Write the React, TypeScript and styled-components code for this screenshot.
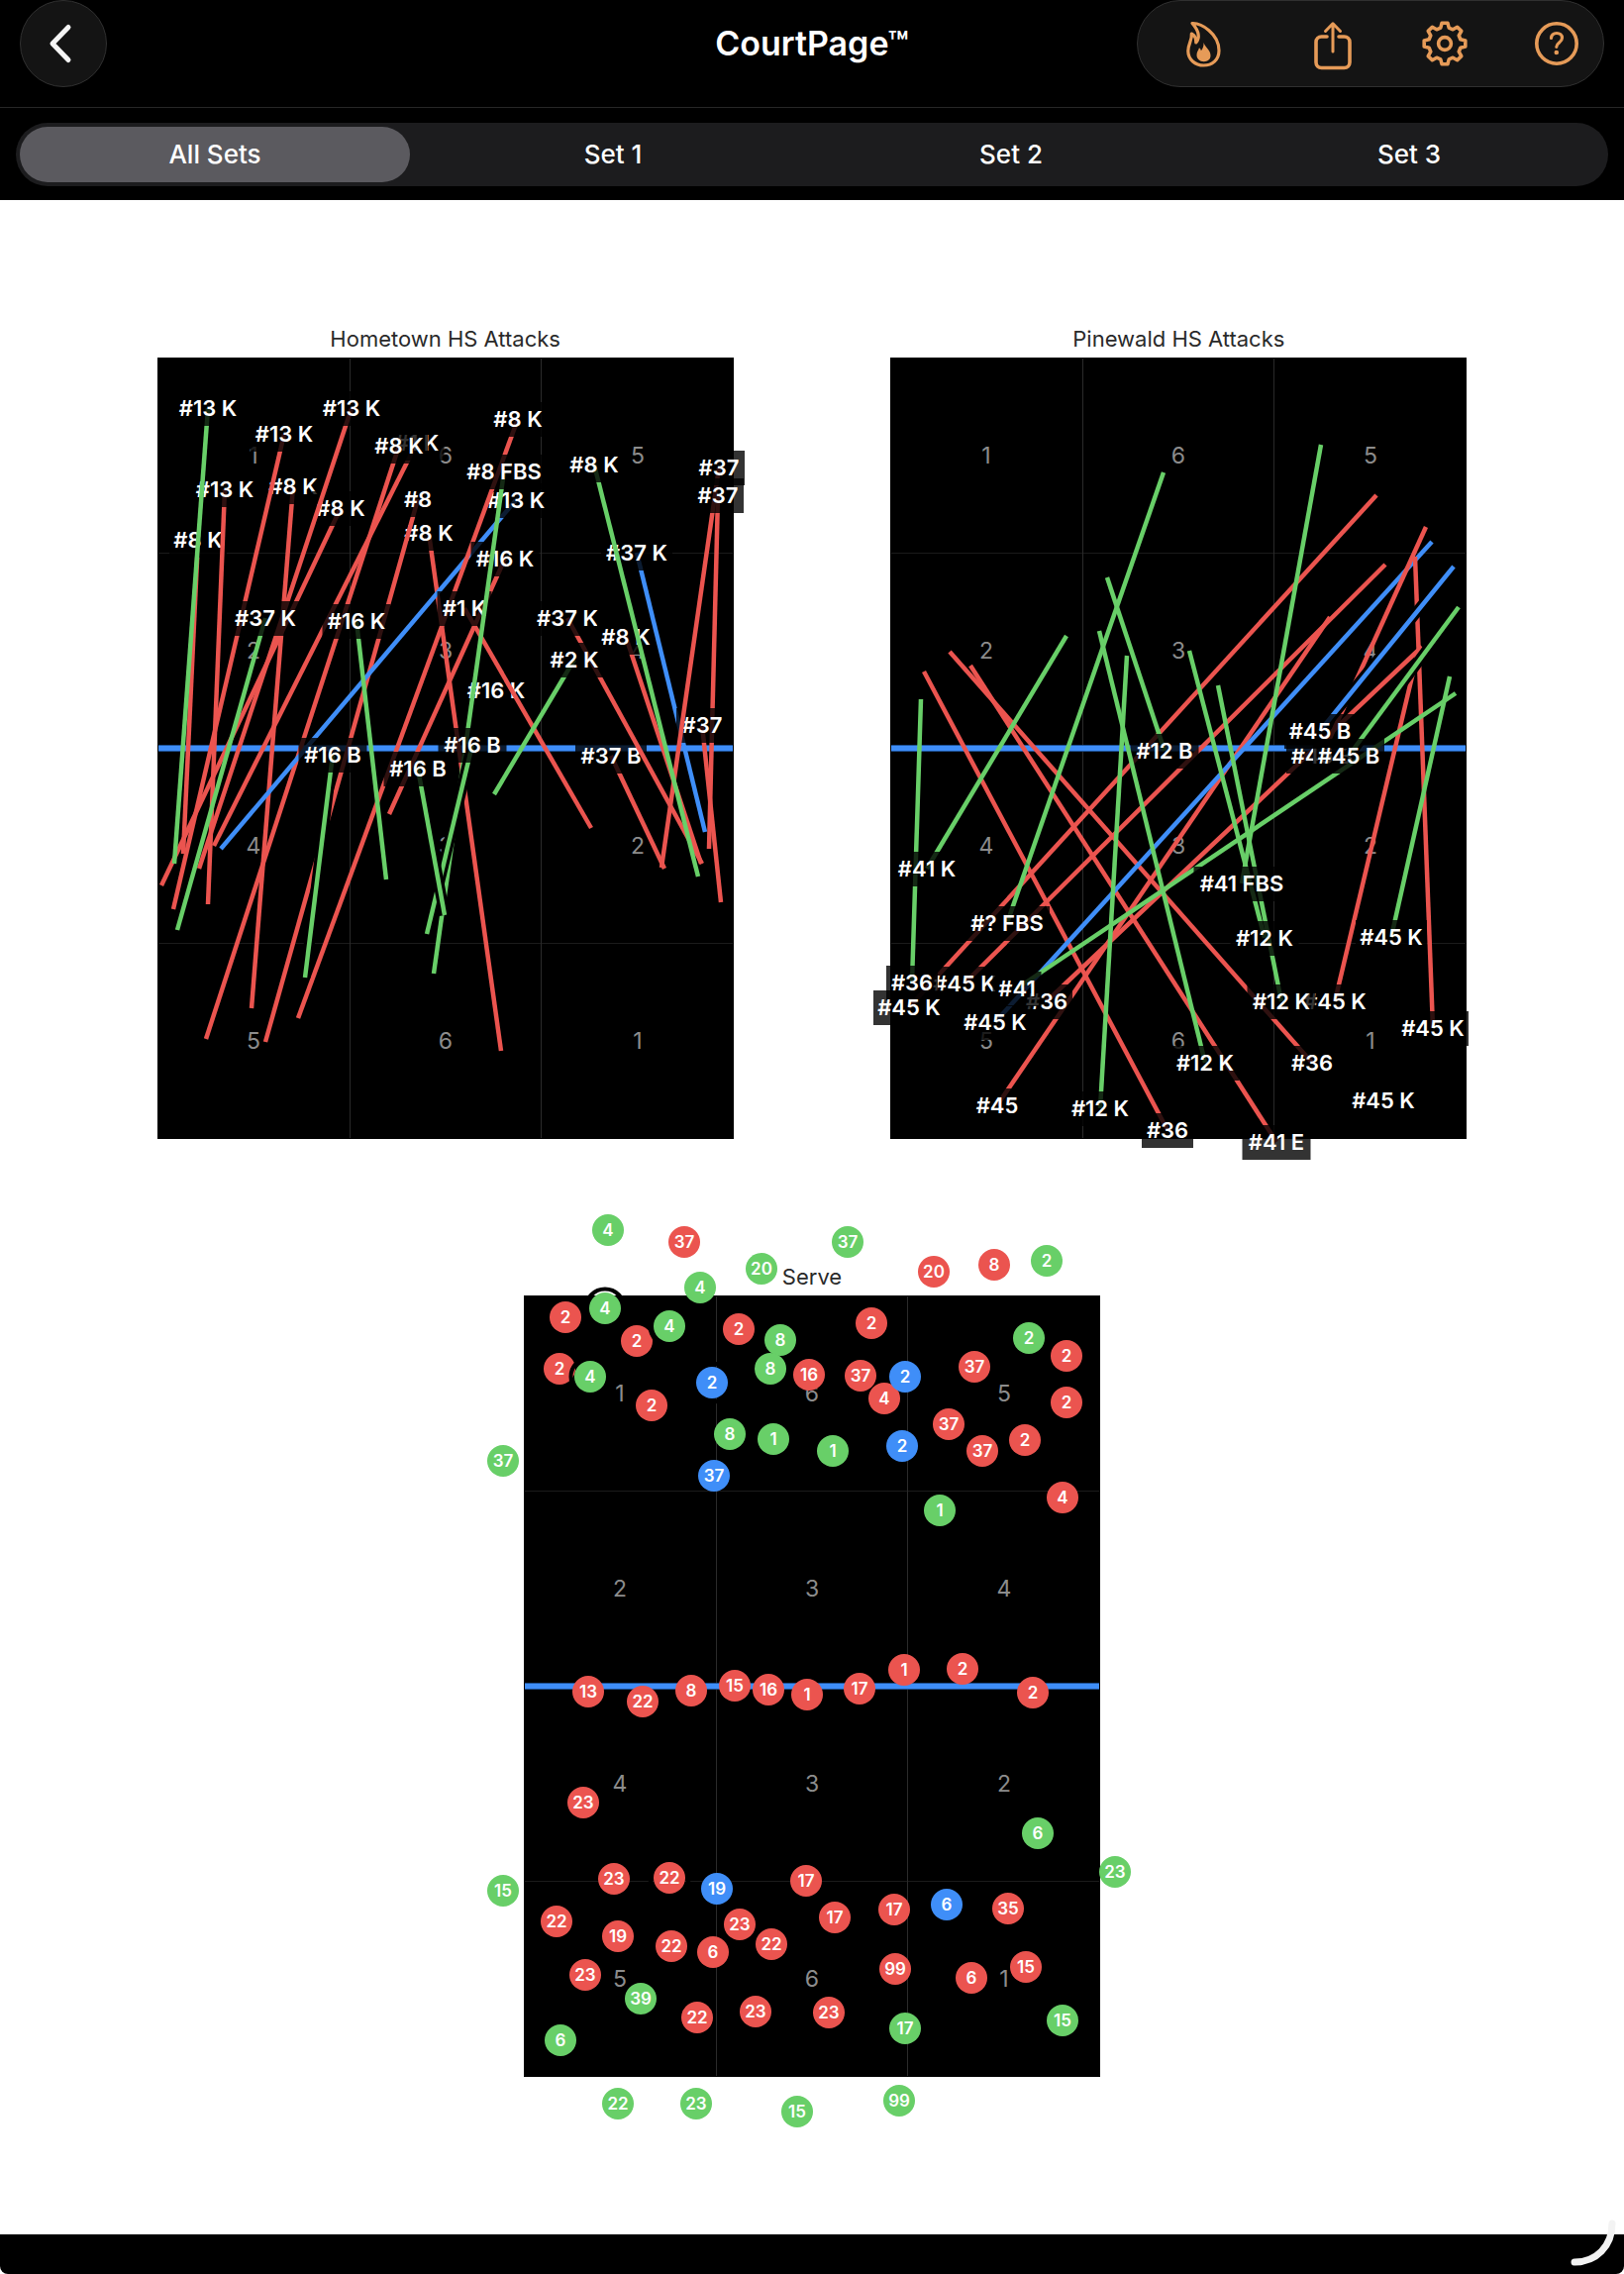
import { useState } from "react";
import styled, { createGlobalStyle } from "styled-components";

type Tone = "red" | "green" | "blue";

interface Attack {
  label: string;
  tone: Tone;
  at: [number, number];
  to?: [number, number];
  halo?: boolean;
}

interface Serve {
  player: number;
  tone: Tone;
  x: number;
  y: number;
  halo?: boolean;
}

const tones: Record<Tone, string> = {
  red: "#eb544f",
  green: "#68cf68",
  blue: "#3f8ef8",
};

const COURT_WIDTH = 582;
const COURT_HEIGHT = 789;
const sets = ["All Sets", "Set 1", "Set 2", "Set 3"];
const zones = [
  [1, 6, 5],
  [2, 3, 4],
  [4, 3, 2],
  [5, 6, 1],
];

const attack = (
  label: string,
  tone: Tone,
  at: [number, number],
  to?: [number, number],
  halo?: boolean
): Attack => ({ label, tone, at, to, halo });

const serve = (
  player: number,
  tone: Tone,
  x: number,
  y: number,
  halo?: boolean
): Serve => ({ player, tone, x, y, halo });

// an empty label draws only the line, its label comes later in the list
const homeAttacks: Attack[] = [
  attack("#8 K", "red", [41, 184], [26, 501]),
  attack("#8 K", "red", [137, 130], [95, 657]),
  attack("#8 K", "red", [185, 152], [4, 533]),
  attack("#13 K", "red", [68, 133], [51, 552]),
  attack("#13 K", "red", [128, 77], [16, 557]),
  attack("#13 K", "red", [196, 51], [42, 516]),
  attack("#1 K", "red", [262, 86], [57, 493]),
  attack("#8 K", "red", [244, 89], [49, 688]),
  attack("#8 K", "red", [274, 177], [347, 700]),
  attack("#8", "red", [263, 143], [109, 691]),
  attack("#13 K", "blue", [362, 144], [64, 496]),
  attack("#8 K", "red", [364, 62], [142, 667]),
  attack("#16 K", "red", [351, 203], [234, 461]),
  attack("#16 K", "red", [342, 336]),
  attack("#1 K", "red", [310, 253], [438, 475]),
  attack("#37 B", "red", [458, 402], [512, 516]),
  attack("#37 K", "red", [414, 263], [550, 511]),
  attack("#8 K", "red", [473, 282], [549, 511]),
  attack("", "red", [566, 139], [557, 496]),
  attack("#37 K", "blue", [484, 197], [553, 479]),
  attack("#37", "red", [550, 371], [569, 550]),
  attack("#37", "red", [567, 111], [509, 515]),
  attack("#37", "red", [566, 139]),
  attack("#13 K", "green", [51, 51], [17, 511]),
  attack("#37 K", "green", [109, 263], [20, 578]),
  attack("#16 K", "green", [201, 266], [231, 527]),
  attack("#8 FBS", "green", [350, 115], [279, 622]),
  attack("#2 K", "green", [421, 305], [340, 441]),
  attack("#8 K", "green", [441, 108], [546, 524]),
  attack("#16 B", "green", [177, 401], [149, 626], true),
  attack("#16 B", "green", [318, 391], [272, 582], true),
  attack("#16 B", "green", [263, 415], [290, 563], true),
];

const awayAttacks: Attack[] = [
  attack("#36", "red", [280, 780], [34, 317]),
  attack("#41 E", "red", [390, 792], [81, 311]),
  attack("#36", "red", [426, 712], [60, 297]),
  attack("", "red", [19, 656], [491, 139]),
  attack("#45 K", "red", [75, 632], [500, 209]),
  attack("#45", "red", [108, 755], [444, 262]),
  attack("#36", "red", [158, 650], [537, 292]),
  attack("#45 K", "red", [449, 650], [533, 297]),
  attack("#45 K", "blue", [106, 671], [547, 186]),
  attack("#45 B", "red", [436, 402], [541, 171]),
  attack("#45 K", "red", [548, 677], [530, 201]),
  attack("#45 B", "blue", [434, 377], [569, 211], true),
  attack("#36", "green", [22, 631], [31, 345]),
  attack("#45 K", "red", [19, 656]),
  attack("#41 K", "green", [37, 516], [178, 281]),
  attack("#? FBS", "green", [118, 571], [276, 116]),
  attack("#12 K", "green", [212, 758], [239, 301]),
  attack("#12 B", "green", [277, 397], [219, 222]),
  attack("#12 K", "green", [318, 712], [211, 276]),
  attack("#41", "green", [128, 637], [571, 339]),
  attack("#12 K", "green", [395, 650], [331, 331]),
  attack("#12 K", "green", [378, 586], [302, 296]),
  attack("#41 FBS", "green", [355, 531], [435, 88]),
  attack("#45 K", "green", [506, 585], [565, 322]),
  attack("#45 B", "green", [463, 402], [574, 252], true),
  attack("#45 K", "red", [498, 750]),
];

const serves: Serve[] = [
  serve(4, "green", 85, -66),
  serve(37, "red", 162, -54),
  serve(20, "green", 240, -27),
  serve(4, "green", 178, -8),
  serve(37, "green", 327, -54),
  serve(20, "red", 414, -24),
  serve(8, "red", 475, -31),
  serve(2, "green", 528, -35),
  serve(2, "red", 42, 22),
  serve(4, "green", 82, 13, true),
  serve(2, "red", 114, 46),
  serve(4, "green", 147, 31, true),
  serve(2, "red", 36, 74),
  serve(4, "green", 67, 82, true),
  serve(2, "blue", 190, 88, true),
  serve(2, "red", 129, 111),
  serve(2, "red", 217, 34),
  serve(8, "green", 259, 45),
  serve(8, "green", 249, 74),
  serve(16, "red", 288, 80),
  serve(37, "red", 340, 81),
  serve(4, "red", 364, 104),
  serve(2, "blue", 385, 82),
  serve(2, "red", 351, 28),
  serve(37, "red", 455, 72),
  serve(2, "green", 510, 43),
  serve(2, "red", 548, 61),
  serve(2, "red", 548, 108),
  serve(37, "red", 429, 130),
  serve(37, "red", 463, 157),
  serve(2, "red", 506, 146),
  serve(2, "blue", 382, 152),
  serve(8, "green", 208, 140),
  serve(1, "green", 252, 145),
  serve(1, "green", 312, 157),
  serve(37, "blue", 192, 182),
  serve(37, "green", -21, 167),
  serve(4, "red", 544, 204),
  serve(1, "green", 420, 217),
  serve(13, "red", 65, 400),
  serve(22, "red", 120, 410),
  serve(8, "red", 169, 399),
  serve(15, "red", 213, 394),
  serve(16, "red", 247, 398),
  serve(1, "red", 286, 403),
  serve(17, "red", 339, 397),
  serve(1, "red", 384, 378),
  serve(2, "red", 443, 377),
  serve(2, "red", 514, 401),
  serve(23, "red", 60, 512),
  serve(6, "green", 519, 543),
  serve(23, "green", 597, 582),
  serve(15, "green", -21, 601),
  serve(23, "red", 91, 589),
  serve(22, "red", 147, 588, true),
  serve(19, "blue", 195, 599),
  serve(17, "red", 285, 591),
  serve(17, "red", 314, 628),
  serve(17, "red", 374, 620),
  serve(6, "blue", 427, 615),
  serve(35, "red", 489, 619),
  serve(22, "red", 33, 632),
  serve(19, "red", 95, 647),
  serve(22, "red", 149, 657),
  serve(6, "red", 191, 663),
  serve(23, "red", 218, 635),
  serve(22, "red", 250, 655),
  serve(99, "red", 375, 680),
  serve(6, "red", 452, 689),
  serve(15, "red", 507, 678),
  serve(23, "red", 62, 686),
  serve(39, "green", 118, 710),
  serve(22, "red", 175, 729),
  serve(23, "red", 234, 723),
  serve(23, "red", 308, 724),
  serve(17, "green", 385, 740),
  serve(15, "green", 544, 732),
  serve(6, "green", 37, 752),
  serve(22, "green", 95, 816),
  serve(23, "green", 174, 816),
  serve(15, "green", 276, 824),
  serve(99, "green", 379, 813),
];

const charWidths: Record<string, number> = { " ": 6, "1": 11 };

// room for the text plus 5px on each side
const labelWidth = (label: string) =>
  [...label].reduce((sum, char) => sum + (charWidths[char] ?? 14), 10);

const gearOutline = () => {
  const points: string[] = [];
  for (let tooth = 0; tooth < 8; tooth++) {
    const center = tooth * 45 - 90;
    [
      [-15, 16.4],
      [-8, 21],
      [8, 21],
      [15, 16.4],
    ].forEach(([offset, radius]) => {
      const angle = ((center + offset) * Math.PI) / 180;
      points.push(
        `${24 + radius * Math.cos(angle)} ${24 + radius * Math.sin(angle)}`
      );
    });
  }
  return `M${points.join("L")}Z`;
};

function AttackMark({ label, tone, at, to, halo }: Attack) {
  const width = labelWidth(label);
  const [x, y] = at;
  const line = to && { x1: x, y1: y, x2: to[0], y2: to[1] };

  return (
    <g>
      {line && halo && <line {...line} stroke="#000" strokeWidth={11} />}
      {line && <line {...line} stroke={tones[tone]} strokeWidth={4.5} />}
      {label && (
        <>
          <rect
            x={x - width / 2}
            y={y - 17}
            width={width}
            height={35}
            fill="#000"
            fillOpacity={0.8}
          />
          <AttackText x={x} y={y + 8}>
            {label}
          </AttackText>
        </>
      )}
    </g>
  );
}

function ServeMark({ player, tone, x, y, halo }: Serve) {
  return (
    <g>
      {halo && (
        <circle cx={x} cy={y} r={19.5} fill="none" stroke="#000" strokeWidth={4} />
      )}
      <circle cx={x} cy={y} r={16} fill={tones[tone]} />
      <ServeText x={x} y={y + 6}>
        {player}
      </ServeText>
    </g>
  );
}

interface CourtProps {
  title: string;
  attacks?: Attack[];
  serves?: Serve[];
}

function Court({ title, attacks = [], serves = [] }: CourtProps) {
  const column = COURT_WIDTH / 3;
  const row = COURT_HEIGHT / 4;

  return (
    <Figure>
      <Caption>{title}</Caption>
      <Chart
        viewBox={`0 0 ${COURT_WIDTH} ${COURT_HEIGHT}`}
        role="img"
        aria-label={title}
      >
        <rect width={COURT_WIDTH} height={COURT_HEIGHT} fill="#000" />
        <path d="M1 197.5H581M1 591.5H581" stroke="#1b1b1b" strokeWidth={1} />
        <path d="M194.5 1V788M387.5 1V788" stroke="#2a2a2a" strokeWidth={1} />
        <path d="M1 394.5H581" stroke="#1d4f92" strokeWidth={7} />
        <path d="M1 394.5H581" stroke={tones.blue} strokeWidth={5} />
        {zones.map((line, r) =>
          line.map((zone, c) => (
            <ZoneText
              key={`${r}-${c}`}
              x={column * (c + 0.5)}
              y={row * (r + 0.5) + 8}
            >
              {zone}
            </ZoneText>
          ))
        )}
        {attacks.map((item, index) => (
          <AttackMark key={index} {...item} />
        ))}
        {serves.map((item, index) => (
          <ServeMark key={index} {...item} />
        ))}
      </Chart>
    </Figure>
  );
}

export default function App() {
  const [current, setCurrent] = useState(sets[0]);

  return (
    <Page>
      <GlobalStyle />
      <Header>
        <BackButton type="button" aria-label="Back">
          <Icon viewBox="0 0 48 48">
            <path d="M29 7.500 13 24l16 16.500" strokeWidth="5" />
          </Icon>
        </BackButton>
        <Title>CourtPage™</Title>
        <Actions>
          <FlameButton type="button" aria-label="Highlights">
            <Icon viewBox="0 0 48 48">
              <path
                d="M13 3.500C22 3 40 14 40 31c0 9.500-7 15-15.500 15S8.800 40 8.800 31.500C8.800 24 13 21 12.300 14c3.400 1.600 4.700 4.500 4.500 9 4.200-5 2.700-12-3.800-19.500Z"
                strokeWidth="3.200"
              />
              <path
                d="M24.500 23c1.500 5 7 7.500 7 13 0 4-3 6.200-6.700 6.200-4.300 0-7.300-2.800-7.300-6.700 0-3 1.600-4.500 2.500-7.300 1.200.8 1.700 1.800 1.900 3.100 1.900-2.200 2.800-5 2.600-8.300Z"
                fill="currentColor"
                stroke="none"
              />
            </Icon>
          </FlameButton>
          <IconButton type="button" aria-label="Share">
            <Icon viewBox="0 0 48 48">
              <path d="M18 17h-5.500a5.500 5.500 0 0 0-5.500 5.500V43a5.500 5.500 0 0 0 5.500 5.500h23A5.500 5.500 0 0 0 41 43V22.500a5.500 5.500 0 0 0-5.500-5.500H30" />
              <path d="M24 32V4M16.500 11.500 24 3.800l7.500 7.700" strokeWidth="3" />
            </Icon>
          </IconButton>
          <IconButton type="button" aria-label="Settings">
            <Icon viewBox="0 0 48 48">
              <path d={gearOutline()} />
              <circle cx="24" cy="24" r="6.400" />
            </Icon>
          </IconButton>
          <IconButton type="button" aria-label="Help">
            <Icon viewBox="0 0 48 48">
              <circle cx="24" cy="24" r="20.200" />
              <path
                d="M18.500 18.500c.2-3.200 2.300-5 5.500-5s5.500 1.900 5.500 4.800c0 4.700-5.700 4.500-5.700 9"
                strokeWidth="3.200"
              />
              <circle cx="23.800" cy="33" r="2.300" fill="currentColor" stroke="none" />
            </Icon>
          </IconButton>
        </Actions>
      </Header>
      <SetBar>
        <Sets role="tablist">
          {sets.map((name) => (
            <SetButton
              key={name}
              type="button"
              role="tab"
              aria-selected={name === current}
              $active={name === current}
              onClick={() => setCurrent(name)}
            >
              {name}
            </SetButton>
          ))}
        </Sets>
      </SetBar>
      <Main>
        <Row>
          <Court title="Hometown HS Attacks" attacks={homeAttacks} />
          <Court title="Pinewald HS Attacks" attacks={awayAttacks} />
        </Row>
        <Row>
          <Court title="Serve" serves={serves} />
        </Row>
      </Main>
      <Footer>
        <CornerMark viewBox="0 0 52 52" aria-hidden="true">
          <path d="M40 1C40 24 24 40 2 40" />
        </CornerMark>
      </Footer>
    </Page>
  );
}

const GlobalStyle = createGlobalStyle`
  * {
    box-sizing: border-box;
  }
  body {
    margin: 0;
    background: #ffffff;
    font-family: "Inter", "Liberation Sans", sans-serif;
  }
  button {
    padding: 0;
    border: none;
    background: none;
    color: inherit;
    font-family: inherit;
    cursor: pointer;
  }
`;
const Page = styled.div`
  display: flex;
  flex-direction: column;
  min-height: 100vh;
`;
const Header = styled.header`
  display: grid;
  grid-template-columns: 1fr auto 1fr;
  align-items: center;
  padding: 0 20px 20px;
  border-bottom: 1px solid #262626;
  background: #000000;
  color: #ffffff;
`;
const BackButton = styled.button`
  display: flex;
  align-items: center;
  justify-content: center;
  width: 88px;
  height: 88px;
  border: 1px solid #303030;
  border-radius: 50%;
  background: #141414;
  color: #f4f4f4;
`;
const Title = styled.h1`
  margin: 0;
  font-size: 34px;
  font-weight: 600;
  line-height: 40px;
`;
const Actions = styled.div`
  display: flex;
  align-items: center;
  justify-content: space-between;
  justify-self: end;
  width: 472px;
  height: 88px;
  padding: 0 19px 0 38px;
  border: 1px solid #303030;
  border-radius: 44px;
  background: #141414;
  color: #e69b58;
`;
const IconButton = styled.button`
  display: flex;
  align-items: center;
  justify-content: center;
  width: 56px;
  height: 56px;
`;
const FlameButton = styled(IconButton)`
  margin-right: 18px;
`;
const Icon = styled.svg`
  width: 48px;
  height: 48px;
  overflow: visible;
  fill: none;
  stroke: currentColor;
  stroke-width: 3.6;
  stroke-linecap: round;
  stroke-linejoin: round;
`;
const SetBar = styled.nav`
  padding: 15px 16px 14px;
  background: #000000;
`;
const Sets = styled.div`
  display: grid;
  grid-template-columns: repeat(4, 1fr);
  height: 64px;
  border-radius: 32px;
  background: #1c1c1e;
`;
const SetButton = styled.button<{ $active: boolean }>`
  margin: 4px;
  padding-bottom: 2px;
  border-radius: 28px;
  background: ${({ $active }) => ($active ? "#5b5a5f" : "transparent")};
  color: #ffffff;
  font-size: 26px;
  font-weight: 500;
`;
const Main = styled.main`
  display: flex;
  flex: 1;
  flex-direction: column;
  gap: 127px;
  padding: 128px 0;
  background: #ffffff;
`;
const Row = styled.section`
  display: flex;
  justify-content: space-evenly;
`;
const Figure = styled.figure`
  flex: 0 1 582px;
  min-width: 0;
  margin: 0;
`;
const Caption = styled.figcaption`
  margin-bottom: 7px;
  color: #2a2a2a;
  font-size: 22px;
  line-height: 24px;
  text-align: center;
`;
const Chart = styled.svg`
  display: block;
  width: 100%;
  height: auto;
  overflow: visible;
`;
const ZoneText = styled.text`
  fill: #8c8c8c;
  font-size: 23px;
  text-anchor: middle;
`;
const AttackText = styled.text`
  fill: #ffffff;
  font-size: 22px;
  font-weight: 600;
  text-anchor: middle;
`;
const ServeText = styled.text`
  fill: #ffffff;
  font-size: 17px;
  font-weight: 600;
  text-anchor: middle;
`;
const Footer = styled.footer`
  position: relative;
  height: 40px;
  border-radius: 0 0 8px 8px;
  background: #000000;
`;
const CornerMark = styled.svg`
  position: absolute;
  right: 0;
  bottom: 0;
  width: 52px;
  height: 52px;
  overflow: visible;
  fill: none;
  stroke: #f3f3f3;
  stroke-width: 7;
  stroke-linecap: round;
`;
